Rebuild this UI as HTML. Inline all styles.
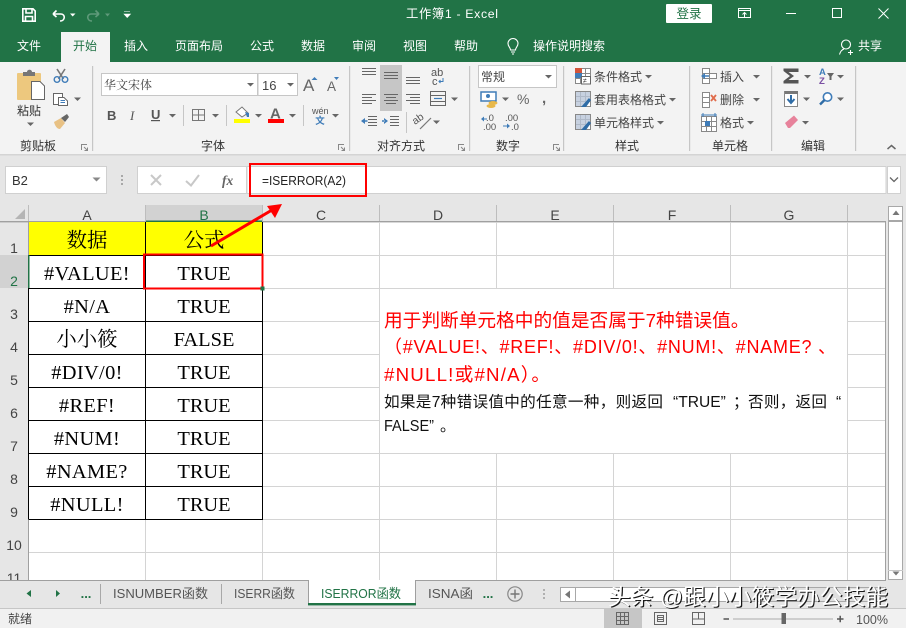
<!DOCTYPE html>
<html lang="zh"><head><meta charset="utf-8"><title>工作簿1 - Excel</title>
<style>
html,body{margin:0;padding:0;width:906px;height:628px;overflow:hidden;background:#fff}
svg{display:block;position:absolute;left:0;top:0}
text{font-family:"Liberation Sans","Noto Sans CJK SC",sans-serif;font-size:12px;fill:#444}
.w{fill:#fff}
.d{fill:#333}
.c{text-anchor:middle}
.h{font-size:14px;fill:#444;text-anchor:middle}
.s{font-family:"Liberation Serif","Noto Serif CJK SC",serif;font-size:20.4px;fill:#000;text-anchor:middle}
.a{letter-spacing:.35px}
.r{font-size:18.7px;fill:#f00}
.b{font-size:15.6px;fill:#111}
.t{font-size:13px;fill:#555}
</style></head><body>
<svg width="906" height="628" viewBox="0 0 906 628" xmlns="http://www.w3.org/2000/svg">
<defs>
<path id="ar" d="M-3.5 -1.5H3.5L0 2Z" fill="#666"/>
<g id="launch" fill="none" stroke="#888" stroke-width="1"><path d="M.5 6V.5H6"/><path d="M3 3L6 6" /><path d="M6.5 3.5V6.5H3.5"/></g>
<g id="tbl" fill="#fff" stroke="#888" stroke-width="1"><rect x=".5" y=".5" width="15" height="15"/><path d="M.5 5.5H15.5M.5 10.5H15.5M5.5 .5V15.5M10.5 .5V15.5"/></g>
</defs>

<!-- title + tabs -->
<rect width="906" height="62" fill="#217346"/>
<g fill="none" stroke="#fff" stroke-width="1.6">
<path d="M22.8 8.8H33L35.2 11V21.2H22.8Z"/>
<path d="M26 9V13H32V9M25.5 21V16.5H32.5V21"/>
<path d="M53 14L56.5 10.5M53 14L56.5 17M53 14H61C65.5 14 65.5 21 60 21"/>
</g>
<path d="M70 13.5H75.5L72.7 16.5Z" fill="#fff"/>
<g fill="none" stroke="#5f9a7a" stroke-width="1.6"><path d="M99 14L95.5 10.5M99 14L95.5 17M99 14H91C86.5 14 86.5 21 92 21"/></g>
<path d="M105 13.5H110L107.5 16.5Z" fill="#5f9a7a"/>
<path d="M124 11.5H130M124 14H130.5L127.2 17.5Z" fill="#fff" stroke="#fff" stroke-width=".6"/>
<text x="406" y="18" class="w" style="font-size:12.3px" textLength="92">工作簿1  -  Excel</text>
<rect x="666" y="4" width="46" height="19" rx="1" fill="#fff"/>
<text x="689" y="18" class="c" style="fill:#217346;font-size:12.5px">登录</text>
<g fill="none" stroke="#fff" stroke-width="1">
<rect x="738.5" y="8.5" width="12" height="9"/><path d="M738 10.5H751M744.5 17V12.5M742.5 14.5L744.5 12.5L746.5 14.5"/>
<path d="M786 13.5H796"/><rect x="832.5" y="8.5" width="9" height="9"/>
<path d="M878.5 8.5L888.5 18.5M888.5 8.5L878.5 18.5"/>
</g>
<rect x="61" y="32" width="49" height="30" fill="#f3f3f3"/>
<g class="w">
<text x="17" y="50" class="w">文件</text>
<text x="73" y="50" style="fill:#217346">开始</text>
<text x="124" y="50" class="w">插入</text>
<text x="175" y="50" class="w">页面布局</text>
<text x="250" y="50" class="w">公式</text>
<text x="301" y="50" class="w">数据</text>
<text x="352" y="50" class="w">审阅</text>
<text x="403" y="50" class="w">视图</text>
<text x="454" y="50" class="w">帮助</text>
<text x="533" y="50" class="w">操作说明搜索</text>
<text x="858" y="50" class="w">共享</text>
</g>
<g fill="none" stroke="#fff" stroke-width="1.1">
<path d="M510.5 50C510.5 47.5 508 46.5 508 43.5A5 5 0 0 1 518 43.5C518 46.5 515.5 47.5 515.5 50ZM511 52H515M512 54H514"/>
<circle cx="846" cy="44.5" r="4.5"/><path d="M839.5 54.5C840.5 51 842.5 49.5 844 49M848 52.5H853M850.5 50V55" />
</g>

<!-- ribbon -->
<rect y="62" width="906" height="93" fill="#f3f3f3"/>
<rect y="155" width="906" height="50" fill="#e6e6e6"/>
<rect y="154" width="906" height="1.5" fill="#d4d4d4"/>
<g fill="#c6c6c6">
<rect x="92" y="66" width="1.2" height="85"/><rect x="349" y="66" width="1.2" height="85"/>
<rect x="469" y="66" width="1.2" height="85"/><rect x="563" y="66" width="1.2" height="85"/>
<rect x="689" y="66" width="1.2" height="85"/><rect x="771" y="66" width="1.2" height="85"/>
<rect x="855" y="66" width="1.2" height="85"/>
<rect x="183" y="105" width="1" height="21"/><rect x="226" y="105" width="1" height="21"/><rect x="303" y="105" width="1" height="21"/>
<rect x="406" y="112" width="1" height="21"/>
</g>
<!-- clipboard -->
<rect x="17" y="73" width="24" height="27" rx="1" fill="#edc87e"/>
<path d="M23 73V72H27C27 69 32 69 32 72H35V76H23Z" fill="#767676"/>
<path d="M31.5 81.5H40L44.5 86V99.5H31.5Z" fill="#fff" stroke="#666"/>
<text x="17" y="115" class="d">粘贴</text>
<use href="#ar" x="30.5" y="124"/>
<g fill="none" stroke="#777" stroke-width="1.6"><path d="M57 69L63.5 79M65 69L58.5 79"/></g>
<g fill="none" stroke="#3f7cb8" stroke-width="1.4"><circle cx="57" cy="79.5" r="2.8"/><circle cx="65" cy="79.5" r="2.8"/></g>
<g fill="#fff" stroke="#666"><rect x="53.5" y="93.5" width="9" height="11"/><path d="M58.5 97.5H64L67.5 101V105.5H58.5Z"/></g>
<path d="M60.5 100.5H65M60.5 102.5H65" stroke="#3f7cb8"/>
<use href="#ar" x="77.5" y="99"/>
<path d="M54 122L61 118L65 123L60 129C57 129 55 126 54 122Z" fill="#e8c184"/>
<path d="M61 118L67 114L69 117L65 122Z" fill="#666"/>
<text x="20" y="150" class="d">剪贴板</text>
<use href="#launch" x="81" y="144"/>

<!-- font -->
<rect x="101.5" y="73.5" width="156" height="22" fill="#fff" stroke="#c6c6c6"/>
<rect x="258" y="73.5" width="39.5" height="22" fill="#fff" stroke="#c6c6c6"/>
<text x="104" y="89" style="font-family:'Noto Serif CJK SC',serif;font-size:12px;fill:#444">华文宋体</text>
<use href="#ar" x="250.5" y="84.5"/>
<text x="262" y="90" style="font-size:13px">16</text>
<use href="#ar" x="290.5" y="84.5"/>
<text x="303" y="91" style="font-size:17px;fill:#666">A</text>
<path d="M311.5 80L314.5 77L317.5 80Z" fill="#3f7cb8"/>
<text x="327" y="91" style="font-size:13.5px;fill:#666">A</text>
<path d="M334 77H339L336.5 80Z" fill="#3f7cb8"/>
<text x="107" y="120" style="font-size:13px;font-weight:bold;fill:#555">B</text>
<text x="130" y="120" style="font-size:13px;font-style:italic;font-family:'Liberation Serif',serif;fill:#555">I</text>
<text x="151" y="119" style="font-size:13px;font-weight:bold;fill:#555">U</text>
<rect x="151" y="120" width="9" height="1.2" fill="#555"/>
<use href="#ar" x="172.5" y="115.5"/>
<g fill="none" stroke="#777"><rect x="192.5" y="109.5" width="12" height="11"/><path d="M198.5 109.5V120.5M192.5 115H204.5"/></g>
<use href="#ar" x="215.5" y="115.5"/>
<path d="M236 112L242 107L248 113L242 117Z" fill="#fff" stroke="#777"/>
<path d="M245 112L249 113V117H247Z" fill="#3f7cb8"/>
<rect x="234" y="119" width="16" height="4" fill="#ff0"/>
<use href="#ar" x="258.5" y="115.5"/>
<text x="270" y="118.5" style="font-size:15px;font-weight:bold;fill:#666">A</text>
<rect x="268" y="119" width="16" height="4" fill="#f00"/>
<use href="#ar" x="292.5" y="115.5"/>
<text x="312" y="114" style="font-size:9px;fill:#555">wén</text>
<text x="320" y="124" class="c" style="font-size:9.5px;font-weight:bold;fill:#3f7cb8">文</text>
<use href="#ar" x="335.5" y="115.5"/>
<text x="201" y="150" class="d">字体</text>
<use href="#launch" x="338" y="144"/>

<!-- align -->
<rect x="380" y="65" width="22" height="46" fill="#c6c6c6"/>
<g stroke="#666" stroke-width="1" fill="none">
<path d="M362 68.5H376M362 71.5H376M362 74.5H376"/>
<path d="M384 72.5H398M384 75.5H398M384 78.5H398"/>
<path d="M406 77.5H420M406 80.5H420M406 83.5H420"/>
<path d="M362 94.5H376M362 97.5H372M362 100.5H376M362 103.5H372"/>
<path d="M384 94.5H398M386 97.5H396M384 100.5H398M386 103.5H396"/>
<path d="M406 94.5H420M410 97.5H420M406 100.5H420M410 103.5H420"/>
<rect x="430.5" y="91.5" width="15" height="14"/><path d="M431 95.5H445M431 101.5H445"/>
<path d="M368 116.5H377M368 119.5H377M368 122.5H377M368 125.5H377"/>
<path d="M390 116.5H399M390 119.5H399M390 122.5H399M390 125.5H399"/>
</g>
<path d="M434 98.5H442" stroke="#3f7cb8" stroke-width="1.2"/>
<path d="M361 121L365 118V124ZM365 120.3H367.5V121.7H365Z" fill="#3f7cb8"/>
<path d="M388 121L384 118V124ZM382 120.3H384.5V121.7H382Z" fill="#3f7cb8"/>
<text x="431" y="76" style="font-size:11px;fill:#555">ab</text>
<text x="432" y="85" style="font-size:11px;fill:#555">c</text>
<path d="M443 78V81.5H439M440.5 80L439 81.5L440.5 83" fill="none" stroke="#3f7cb8"/>
<use href="#ar" x="454.5" y="99"/>
<text x="415" y="125" transform="rotate(-35 415 125)" style="font-size:10.5px;fill:#555">ab</text>
<path d="M420 129L431 118" stroke="#777" stroke-width="1.2"/>
<use href="#ar" x="436.5" y="122"/>
<text x="377" y="150" class="d">对齐方式</text>
<use href="#launch" x="458" y="144"/>

<!-- number -->
<rect x="478.5" y="65.5" width="78" height="22" fill="#fff" stroke="#c6c6c6"/>
<text x="481" y="81" style="font-family:'Noto Sans CJK SC',sans-serif">常规</text>
<use href="#ar" x="548.5" y="76.5"/>
<rect x="481" y="92" width="15" height="9" fill="#fff" stroke="#3f7cb8" stroke-width="1.5"/>
<circle cx="488" cy="96" r="2" fill="#3f7cb8"/>
<ellipse cx="493" cy="103" rx="4.5" ry="2" fill="#e8b84a"/><ellipse cx="491" cy="106" rx="4.5" ry="2" fill="#e8b84a"/>
<use href="#ar" x="505.5" y="99"/>
<text x="517" y="104" style="font-size:14px;fill:#666">%</text>
<text x="542" y="103" style="font-size:15px;font-weight:bold;fill:#666">,</text>
<text x="486" y="121" style="font-size:9.5px;fill:#555">.0</text>
<text x="483" y="130" style="font-size:9.5px;fill:#555">.00</text>
<path d="M481 119L484 116.5V121.5ZM484 118.5H487V119.5H484Z" fill="#3f7cb8"/>
<text x="505" y="121" style="font-size:9.5px;fill:#555">.00</text>
<text x="511" y="130" style="font-size:9.5px;fill:#555">.0</text>
<path d="M510 126L507 123.5V128.5ZM503 125.5H507V126.5H503Z" fill="#3f7cb8"/>
<text x="496" y="150" class="d">数字</text>
<use href="#launch" x="553" y="144"/>

<!-- styles -->
<use href="#tbl" x="575" y="68"/>
<rect x="575" y="68" width="7" height="5" fill="#d2543a"/><rect x="575" y="73" width="7" height="5" fill="#3f7cb8"/>
<rect x="581.5" y="76.5" width="9" height="7.5" fill="#fff" stroke="#666"/>
<text x="583" y="83" style="font-size:7px;fill:#333">≠</text>
<text x="594" y="81">条件格式</text><use href="#ar" x="648.5" y="76.5"/>
<use href="#tbl" x="575" y="91"/><path d="M576 92H590V98L582 106H576Z" fill="#b9c6d8" opacity=".8"/>
<path d="M581 107L589 98L591 100L586 107Z" fill="#2f6ca6"/>
<text x="594" y="104">套用表格格式</text><use href="#ar" x="672.5" y="99.5"/>
<use href="#tbl" x="575" y="114"/><path d="M576 115H590V121L582 129H576Z" fill="#b9c6d8" opacity=".8"/>
<path d="M581 130L589 121L591 123L586 130Z" fill="#2f6ca6"/>
<text x="594" y="127">单元格样式</text><use href="#ar" x="660.5" y="122.5"/>
<text x="615" y="150" class="d">样式</text>

<!-- cells -->
<g fill="#fff" stroke="#888"><rect x="702.5" y="68.5" width="7" height="5"/><rect x="702.5" y="73.5" width="7" height="5"/><rect x="702.5" y="78.5" width="7" height="5"/><rect x="709.5" y="73.5" width="7" height="5"/></g>
<path d="M701 76L705 73V79ZM705 75.3H709V76.7H705Z" fill="#3f7cb8"/>
<text x="720" y="81">插入</text><use href="#ar" x="756.5" y="76.5"/>
<g fill="#fff" stroke="#888"><rect x="702.5" y="92.5" width="7" height="5"/><rect x="702.5" y="97.5" width="7" height="5"/><rect x="702.5" y="102.5" width="7" height="5"/></g>
<path d="M711 95L716 101M716 95L711 101" stroke="#e06c4c" stroke-width="1.8"/>
<text x="720" y="104">删除</text><use href="#ar" x="756.5" y="99.5"/>
<use href="#tbl" x="701" y="116"/>
<path d="M701 115H717M703 113V117M715 113V117" stroke="#3f7cb8"/>
<rect x="705" y="121" width="5" height="5" fill="#3f7cb8"/>
<text x="720" y="127">格式</text><use href="#ar" x="750.5" y="122.5"/>
<text x="712" y="150" class="d">单元格</text>

<!-- editing -->
<path d="M783.5 68.5H798.5V72H788.5L794 76L788.5 80H798.5V83.5H783.5V81L790 76L783.5 71Z" fill="#555"/>
<use href="#ar" x="807.5" y="76.5"/>
<text x="819" y="75" style="font-size:9.5px;font-weight:bold;fill:#3f7cb8">A</text>
<text x="819" y="84" style="font-size:9.5px;font-weight:bold;fill:#7a4fa3">Z</text>
<path d="M827 73H834L831.5 76.5V80H829.5V76.5Z" fill="#666"/>
<use href="#ar" x="840.5" y="76.5"/>
<rect x="784.5" y="91.5" width="13" height="15" fill="#fff" stroke="#888"/><rect x="785" y="91" width="13" height="3" fill="#777"/>
<path d="M791 95V102M787.5 99L791 103L794.5 99" fill="none" stroke="#2f6ca6" stroke-width="2"/>
<use href="#ar" x="806.5" y="99"/>
<circle cx="827.5" cy="97" r="4.2" fill="#fff" stroke="#3f7cb8" stroke-width="1.6"/>
<path d="M824.5 100L820 104.5" stroke="#2f6ca6" stroke-width="2.4"/>
<use href="#ar" x="840.5" y="99"/>
<path d="M785 123L794 115.5L798 120L790 128H788Z" fill="#e7829b"/>
<use href="#ar" x="805.5" y="122.5"/>
<text x="801" y="150" class="d">编辑</text>
<path d="M887.5 149L891.5 145.5L895.5 149" fill="none" stroke="#666" stroke-width="1.5"/>

<!-- formula bar -->
<rect x="5.5" y="166.5" width="101" height="27" fill="#fff" stroke="#d0d0d0"/>
<text x="12" y="185" style="font-size:13px;fill:#333">B2</text>
<path d="M92.5 177.5H100.5L96.5 181.5Z" fill="#888"/>
<g fill="#a8a8a8"><rect x="121" y="175" width="2" height="2"/><rect x="121" y="179" width="2" height="2"/><rect x="121" y="183" width="2" height="2"/></g>
<rect x="137.5" y="166.5" width="109" height="27" fill="#fff" stroke="#d0d0d0"/>
<rect x="247" y="166.5" width="639" height="27" fill="#fff" stroke="#d0d0d0"/>
<path d="M151 175L161 185M161 175L151 185" stroke="#c8c8c8" stroke-width="2"/>
<path d="M186 181L191 185.5L199 175" fill="none" stroke="#c8c8c8" stroke-width="2"/>
<text x="222" y="185" style="font-family:'Liberation Serif',serif;font-style:italic;font-weight:bold;font-size:13.5px;fill:#666">fx</text>
<text x="262" y="185" style="font-size:13px;fill:#222" textLength="84" lengthAdjust="spacingAndGlyphs">=ISERROR(A2)</text>
<rect x="250" y="164" width="116" height="32" fill="none" stroke="#f00" stroke-width="2"/>
<rect x="887.5" y="166.5" width="13" height="27" fill="#fff" stroke="#d0d0d0"/>
<path d="M890 177.5L894 181.5L898 177.5" fill="none" stroke="#666" stroke-width="1.3"/>

<!-- headers -->
<rect x="0" y="205" width="886" height="17" fill="#e6e6e6"/>
<rect x="0" y="222" width="28" height="358" fill="#e6e6e6"/>
<rect x="146" y="205" width="116" height="17" fill="#d2d2d2"/>
<rect x="0" y="255" width="28" height="33" fill="#d2d2d2"/>
<path d="M15 219H25V209Z" fill="#b5b5b5"/>
<g fill="#bdbdbd">
<rect x="28" y="205" width="1" height="17"/><rect x="145" y="205" width="1" height="17"/><rect x="262" y="205" width="1" height="17"/><rect x="379" y="205" width="1" height="17"/><rect x="496" y="205" width="1" height="17"/><rect x="613" y="205" width="1" height="17"/><rect x="730" y="205" width="1" height="17"/><rect x="847" y="205" width="1" height="17"/>
</g>
<rect x="0" y="221" width="886" height="1.4" fill="#a0a0a0"/>
<rect x="28" y="222" width="1" height="358" fill="#a0a0a0"/>
<rect x="146" y="220.5" width="116" height="2" fill="#217346"/>
<text x="87" y="220" class="h">A</text>
<text x="204" y="220" class="h" style="fill:#217346">B</text>
<text x="321" y="220" class="h">C</text><text x="438" y="220" class="h">D</text><text x="555" y="220" class="h">E</text><text x="672" y="220" class="h">F</text><text x="789" y="220" class="h">G</text>
<text x="14" y="253" class="h">1</text><text x="14" y="286" class="h" style="fill:#217346">2</text><text x="14" y="319" class="h">3</text><text x="14" y="352" class="h">4</text><text x="14" y="385" class="h">5</text><text x="14" y="418" class="h">6</text><text x="14" y="451" class="h">7</text><text x="14" y="484" class="h">8</text><text x="14" y="517" class="h">9</text><text x="14" y="550" class="h">10</text><text x="14" y="583" class="h">11</text>

<!-- grid -->
<g stroke="#d4d4d4" stroke-width="1">
<path d="M379.5 222V580M496.5 222V580M613.5 222V580M730.5 222V580M847.5 222V580"/>
<path d="M263 255.5H885M263 288.5H885M263 321.5H885M263 354.5H885M263 387.5H885M263 420.5H885M263 453.5H885M29 486.5H885M29 519.5H885M29 552.5H885"/>
<path d="M145.5 519V580M262.5 519V580"/>
</g>
<rect x="380" y="289" width="467" height="164" fill="#fff"/>
<rect x="885" y="222" width="1" height="358" fill="#a0a0a0"/>

<!-- cells data -->
<rect x="29" y="222" width="233" height="33" fill="#ff0"/>
<g stroke="#000" stroke-width="1" fill="none">
<path d="M145.5 222V519.5M262.5 222V519.5M28.5 288V519.5"/>
<path d="M29 255.5H262M29 288.5H262M29 321.5H262M29 354.5H262M29 387.5H262M29 420.5H262M29 453.5H262M29 486.5H262M29 519.5H263"/>
</g>
<rect x="28" y="255" width="1.5" height="33" fill="#217346"/>
<text x="87" y="247" class="s">数据</text><text x="204" y="247" class="s">公式</text>
<text x="87" y="280" class="s a">#VALUE!</text><text x="204" y="280" class="s">TRUE</text>
<text x="87" y="313" class="s a">#N/A</text><text x="204" y="313" class="s">TRUE</text>
<text x="87" y="346" class="s">小小筱</text><text x="204" y="346" class="s">FALSE</text>
<text x="87" y="379" class="s a">#DIV/0!</text><text x="204" y="379" class="s">TRUE</text>
<text x="87" y="412" class="s a">#REF!</text><text x="204" y="412" class="s">TRUE</text>
<text x="87" y="445" class="s a">#NUM!</text><text x="204" y="445" class="s">TRUE</text>
<text x="87" y="478" class="s a">#NAME?</text><text x="204" y="478" class="s">TRUE</text>
<text x="87" y="511" class="s a">#NULL!</text><text x="204" y="511" class="s">TRUE</text>

<!-- selection and arrow -->
<rect x="144" y="254.5" width="118.5" height="34" fill="none" stroke="#f00" stroke-width="2"/>
<rect x="260.5" y="286.5" width="4" height="4" fill="#217346"/>
<path d="M211 246L272 210" stroke="#f00" stroke-width="3"/>
<path d="M282 204L267 206L275 218Z" fill="#f00"/>

<!-- merged note -->
<text x="384" y="327" class="r">用于判断单元格中的值是否属于7种错误值。</text>
<text x="384" y="353" class="r" textLength="452" lengthAdjust="spacing" style="font-size:18px">（#VALUE!、#REF!、#DIV/0!、#NUM!、#NAME? 、</text>
<text x="384" y="381" class="r" textLength="166" lengthAdjust="spacing">#NULL!或#N/A）。</text>
<text x="384" y="407" class="b" textLength="279" lengthAdjust="spacing">如果是7种错误值中的任意一种，则返回</text>
<text x="673" y="407" class="b">“TRUE”</text>
<text x="733" y="407" class="b">；</text>
<text x="748" y="407" class="b" textLength="79" lengthAdjust="spacing">否则，返回</text>
<text x="836" y="407" class="b">“</text>
<text x="384" y="431" class="b" textLength="50" lengthAdjust="spacingAndGlyphs">FALSE”</text>
<text x="440" y="431" class="b">。</text>

<!-- vertical scrollbar -->
<rect x="886" y="205" width="20" height="375" fill="#e6e6e6"/>
<rect x="888.5" y="206.5" width="14" height="373" fill="#fff" stroke="#a8a8a8"/>
<rect x="888" y="220" width="15" height="2" fill="#a8a8a8"/>
<path d="M892.5 215H899.5L896 210.5Z" fill="#777"/>
<rect x="888" y="570" width="15" height="1" fill="#c8c8c8"/>
<path d="M892.5 571.5H899.5L896 575.5Z" fill="#777"/>

<!-- sheet tabs -->
<rect x="0" y="580" width="906" height="28" fill="#e6e6e6"/>
<rect x="0" y="580" width="886" height="1" fill="#9f9f9f"/>
<rect x="0" y="608" width="906" height="1" fill="#c6c6c6"/>
<path d="M26.5 593.5L31 590V597ZM60 593.5L56 590V597Z" fill="#217346"/>
<text x="86" y="598" class="c" style="font-size:13px;font-weight:bold;fill:#217346">...</text>
<rect x="100" y="584" width="1" height="20" fill="#a8a8a8"/>
<rect x="221" y="584" width="1" height="20" fill="#a8a8a8"/>
<rect x="308" y="580" width="108" height="24" fill="#fff"/>
<path d="M308.5 604V580M415.5 604V580" stroke="#9f9f9f"/>
<rect x="308" y="603" width="108" height="2.4" fill="#217346"/>
<text x="113" y="598" class="t" textLength="95" lengthAdjust="spacingAndGlyphs">ISNUMBER函数</text>
<text x="234" y="598" class="t" textLength="61" lengthAdjust="spacingAndGlyphs">ISERR函数</text>
<text x="321" y="598" class="t" style="fill:#217346" textLength="80" lengthAdjust="spacingAndGlyphs">ISERROR函数</text>
<text x="428" y="598" class="t" textLength="45" lengthAdjust="spacingAndGlyphs">ISNA函</text>
<text x="488" y="598" class="c" style="font-size:13px;font-weight:bold;fill:#217346">...</text>
<circle cx="515" cy="594" r="7.2" fill="none" stroke="#888" stroke-width="1.2"/>
<path d="M510.5 594H519.5M515 589.5V598.5" stroke="#777" stroke-width="1.4"/>
<g fill="#b0b0b0"><rect x="543" y="589" width="2" height="2"/><rect x="543" y="593" width="2" height="2"/><rect x="543" y="597" width="2" height="2"/></g>
<rect x="560.5" y="587.5" width="325" height="14" fill="#fff" stroke="#a8a8a8"/>
<rect x="575" y="588" width="1" height="13" fill="#a8a8a8"/>
<path d="M565 594.5L570 590.5V598.5Z" fill="#777"/>
<rect x="740" y="588" width="145" height="13" fill="#e0e0e0"/>
<!-- watermark -->
<text x="609.2" y="606.2" textLength="280" lengthAdjust="spacing" style="font-size:22.7px;fill:#1a1a1a">头条 @跟小小筱学办公技能</text>
<text x="608" y="605" textLength="280" lengthAdjust="spacing" style="font-size:22.7px;fill:#fff">头条 @跟小小筱学办公技能</text>

<!-- status bar -->
<rect y="609" width="906" height="19" fill="#f1f1f1"/>
<text x="8" y="623" style="fill:#444">就绪</text>
<rect x="604" y="609" width="38" height="19" fill="#c6c6c6"/>
<g fill="none" stroke="#666">
<rect x="616.5" y="612.5" width="12" height="12"/><path d="M620.5 612V625M624.5 612V625M616 616.5H629M616 620.5H629"/>
<rect x="654.5" y="612.5" width="12" height="12"/><path d="M657.5 615.5H663.5V621.5H657.5ZM658 617.5H663M658 619.5H663"/>
<rect x="692.5" y="612.5" width="12" height="12"/><path d="M698.5 612V619H692.5M698.5 619H704.5"/>
</g>
<path d="M723.5 619H729" stroke="#555" stroke-width="1.5"/>
<rect x="733" y="618.5" width="100" height="1" fill="#aaa"/>
<rect x="781.5" y="613" width="4.5" height="11" fill="#666"/>
<path d="M837 619H843.5M840.2 615.8V622.2" stroke="#555" stroke-width="1.5"/>
<text x="856" y="624" style="font-size:12.5px;fill:#555">100%</text>
</svg>
</body></html>
